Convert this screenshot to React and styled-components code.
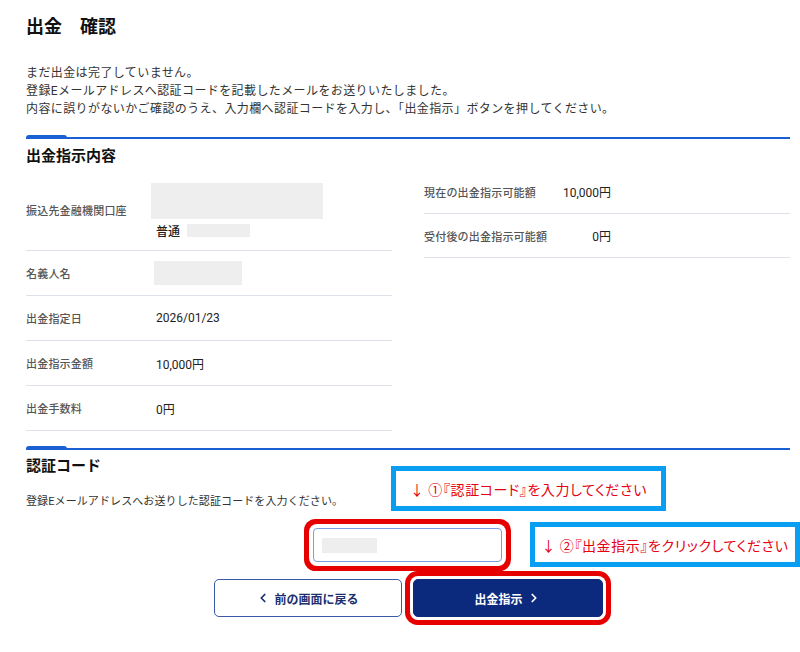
import React from 'react';
import styled, { createGlobalStyle } from 'styled-components';
import { ChevronLeft, ChevronRight } from 'lucide-react';

const GlobalStyle = createGlobalStyle`
  body {
    margin: 0;
    background: #fff;
    font-family: Roboto, "Noto Sans CJK JP", sans-serif;
    color: #222;
  }
`;

const Page = styled.div`
  position: relative;
  width: 800px;
  padding: 14px 10px 20px 26px;
  box-sizing: border-box;
`;

const Title = styled.h1`
  margin: 0;
  font-size: 18px;
  line-height: 26px;
  font-weight: 700;
  color: #111;
`;

const Intro = styled.p`
  margin: 24px 0 0;
  font-size: 12px;
  line-height: 18px;
  letter-spacing: 0.4px;
  color: #333;
`;

const Divider = styled.div`
  display: flex;
  align-items: flex-end;
  height: 4px;
  margin-top: ${({ $top }) => $top}px;
`;

const Accent = styled.div`
  width: 41px;
  height: 4px;
  background: #1a5fd3;
  border-radius: 3px 3px 0 0;
`;

const Line = styled.div`
  flex: 1;
  height: 2px;
  background: #1a5fd3;
`;

const Heading = styled.h2`
  margin: ${({ $top }) => $top}px 0 0;
  font-size: 15px;
  line-height: 22px;
  font-weight: 700;
  color: #111;
`;

const Tables = styled.div`
  display: grid;
  grid-template-columns: 366px 366px;
  column-gap: 32px;
  align-items: start;
  margin-top: 3px;
`;

const Table = styled.div`
  display: flex;
  flex-direction: column;
`;

const Row = styled.div`
  display: grid;
  grid-template-columns: ${({ $cols }) => $cols};
  align-items: center;
  height: ${({ $h }) => $h}px;
  border-bottom: 1px solid #dde1ec;
  box-sizing: border-box;
`;

const Label = styled.div`
  font-size: 11px;
  font-weight: 500;
  color: #555;
  letter-spacing: 0.2px;
`;

const Value = styled.div`
  font-size: 12px;
  color: #222;
  text-align: ${({ $right }) => ($right ? 'right' : 'left')};
`;

const AccountCell = styled.div`
  display: flex;
  flex-direction: column;
  padding-top: 2px;
`;

const Mask = styled.div`
  width: ${({ $w }) => $w}px;
  height: ${({ $h }) => $h}px;
  background: #eeeeee;
`;

const SubLine = styled.div`
  display: flex;
  align-items: center;
  gap: 7px;
  margin-top: 3px;
  padding-left: 5px;
  font-size: 12px;
  font-weight: 500;
`;

const Desc = styled.p`
  margin: 17px 0 0;
  font-size: 11px;
  line-height: 16px;
  color: #333;
  letter-spacing: 0.1px;
`;

const Center = styled.div`
  display: flex;
  justify-content: center;
  gap: 11px;
  margin-top: ${({ $top }) => $top}px;
`;

const CodeInput = styled.div`
  width: 189px;
  height: 34px;
  box-sizing: border-box;
  border: 1px solid #7c9ddf;
  border-radius: 4px;
  display: flex;
  align-items: center;
  padding-left: 8px;
  background: #fff;
  box-shadow: 0 0 0 4px #fff, 0 0 0 9px #e60000;
  margin-left: -2px;
`;

const Button = styled.button`
  width: ${({ $w }) => $w}px;
  height: 38px;
  border-radius: 5px;
  font-family: "Noto Sans CJK JP", sans-serif;
  font-size: 12px;
  font-weight: 700;
  display: flex;
  align-items: center;
  justify-content: center;
  gap: 4px;
  cursor: pointer;
  border: 1px solid ${({ $primary }) => ($primary ? '#0c2a7d' : '#3a5aa8')};
  background: ${({ $primary }) => ($primary ? '#0c2a7d' : '#fff')};
  color: ${({ $primary }) => ($primary ? '#fff' : '#1b2f6e')};
  box-shadow: ${({ $primary }) =>
    $primary ? '0 0 0 3px #fff, 0 0 0 8px #e60000' : 'none'};
`;

const Callout = styled.div`
  position: absolute;
  left: ${({ $x }) => $x}px;
  top: ${({ $y }) => $y}px;
  width: ${({ $w }) => $w}px;
  height: 45px;
  box-sizing: border-box;
  border: 5px solid #0a9ef2;
  background: #fff;
  display: flex;
  align-items: center;
  justify-content: center;
  font-family: "Noto Sans CJK JP", sans-serif;
  font-feature-settings: "palt";
  font-size: 14px;
  color: #e60012;
  letter-spacing: 0.6px;
  white-space: nowrap;
`;

const leftRows = [
  { label: '出金指定日', value: '2026/01/23' },
  { label: '出金指示金額', value: '10,000円' },
  { label: '出金手数料', value: '0円' },
];

const rightRows = [
  { label: '現在の出金指示可能額', value: '10,000円' },
  { label: '受付後の出金指示可能額', value: '0円' },
];

export default function App() {
  return (
    <Page>
      <GlobalStyle />
      <Title>出金　確認</Title>
      <Intro>
        まだ出金は完了していません。
        <br />
        登録Eメールアドレスへ認証コードを記載したメールをお送りいたしました。
        <br />
        内容に誤りがないかご確認のうえ、入力欄へ認証コードを入力し、「出金指示」ボタンを押してください。
      </Intro>

      <Divider $top={17}>
        <Accent />
        <Line />
      </Divider>
      <Heading $top={6}>出金指示内容</Heading>

      <Tables>
        <Table>
          <Row $cols="125px 1fr" $h={81}>
            <Label>振込先金融機関口座</Label>
            <AccountCell>
              <Mask $w={172} $h={36} />
              <SubLine>
                普通
                <Mask $w={63} $h={13} />
              </SubLine>
            </AccountCell>
          </Row>
          <Row $cols="128px 1fr" $h={45}>
            <Label>名義人名</Label>
            <Mask $w={88} $h={24} />
          </Row>
          {leftRows.map((r) => (
            <Row key={r.label} $cols="130px 1fr" $h={45}>
              <Label>{r.label}</Label>
              <Value>{r.value}</Value>
            </Row>
          ))}
        </Table>
        <Table>
          {rightRows.map((r) => (
            <Row key={r.label} $cols="130px 57px 1fr" $h={44}>
              <Label>{r.label}</Label>
              <Value $right>{r.value}</Value>
            </Row>
          ))}
        </Table>
      </Tables>

      <Divider $top={15}>
        <Accent />
        <Line />
      </Divider>
      <Heading $top={5}>認証コード</Heading>
      <Desc>登録Eメールアドレスへお送りした認証コードを入力ください。</Desc>

      <Center $top={18}>
        <CodeInput>
          <Mask $w={55} $h={15} />
        </CodeInput>
      </Center>

      <Center $top={17}>
        <Button $w={188}>
          <ChevronLeft size={14} strokeWidth={3} />
          前の画面に戻る
        </Button>
        <Button $w={190} $primary>
          出金指示
          <ChevronRight size={14} strokeWidth={3} />
        </Button>
      </Center>

      <Callout $x={391} $y={466} $w={275}>
        ↓ ①『認証コード』を入力してください
      </Callout>
      <Callout $x={530} $y={522} $w={270}>
        ↓ ②『出金指示』をクリックしてください
      </Callout>
    </Page>
  );
}
